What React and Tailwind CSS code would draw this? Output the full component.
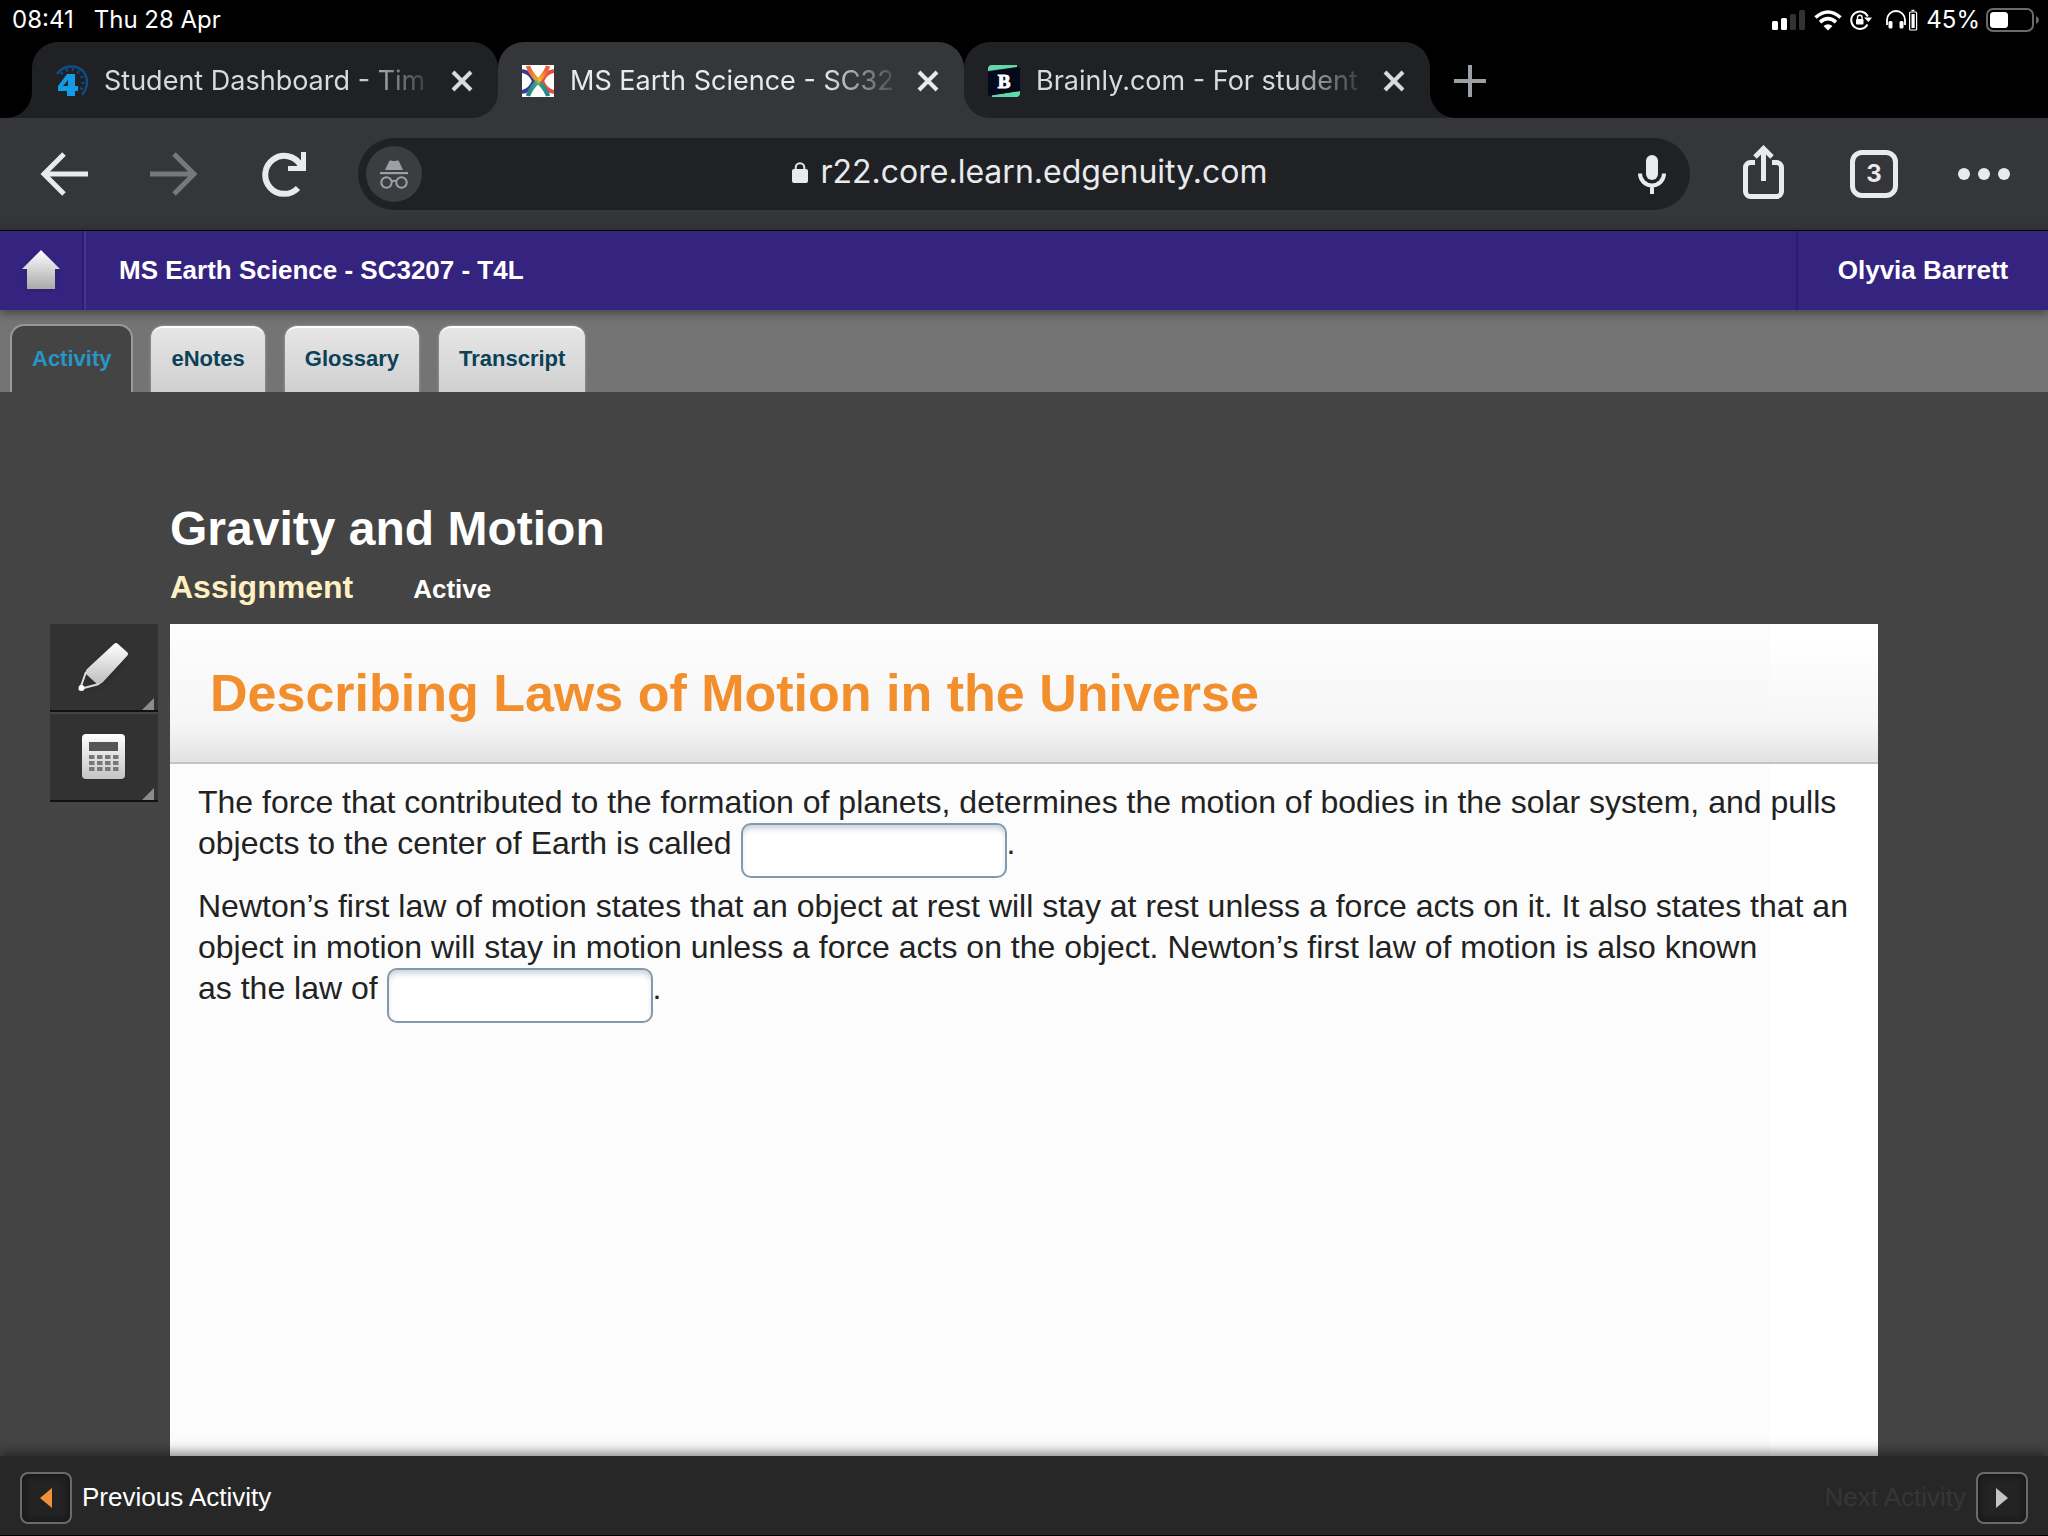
import React from "react";

const TABS = [
  {
    id: "dashboard",
    title: "Student Dashboard - Tim",
    wrap: "bg-[linear-gradient(#000_50%,#35363a_50%)]",
    shape: "bg-[#202124] rounded-[26px] rounded-bl-none text-[#d8dadd]",
    icon: <DashboardLogo />,
  },
  {
    id: "science",
    title: "MS Earth Science - SC32",
    wrap: "bg-black",
    shape: "bg-[#35363a] rounded-t-[26px] text-[#e8eaed]",
    icon: <StarLogo />,
  },
  {
    id: "brainly",
    title: "Brainly.com - For student",
    wrap: "bg-[linear-gradient(#000_50%,#35363a_50%)]",
    shape: "bg-[#202124] rounded-[26px] rounded-br-none text-[#d8dadd]",
    icon: <BrainlyLogo />,
  },
];

function DashboardLogo() {
  return (
    <svg viewBox="0 0 32 32" className="size-8 shrink-0" aria-hidden="true">
      <path d="M1 9C7 0 20-1 27 6c6 7 5 17-1 24" fill="none" stroke="#0c4f86" strokeWidth="2.500" />
      <path d="M5 9C11 3 19 3 24 9c4 5 4 12-1 18" fill="none" stroke="#0c4f86" strokeWidth="3" strokeDasharray="2 4" />
      <path d="M11 9h8v12h3v5h-3v5H11v-5H2v-5zm1 6l-5 6h5z" fill="#149be6" />
    </svg>
  );
}

function StarLogo() {
  return (
    <svg viewBox="0 0 32 32" className="size-8 shrink-0" fill="none" aria-hidden="true">
      <defs>
        <linearGradient id="armA" x1="0" y1="0" x2="1" y2="1">
          <stop offset="0.1" stopColor="#f0633a" />
          <stop offset="0.4" stopColor="#f19a2c" />
          <stop offset="0.6" stopColor="#3f9a80" />
          <stop offset="1" stopColor="#21808c" />
        </linearGradient>
        <linearGradient id="armB" x1="1" y1="0" x2="0" y2="1">
          <stop offset="0.1" stopColor="#ee5f3a" />
          <stop offset="0.45" stopColor="#fbb72c" />
          <stop offset="0.6" stopColor="#3f9a80" />
          <stop offset="1" stopColor="#21808c" />
        </linearGradient>
      </defs>
      <rect width="32" height="32" fill="#fff" />
      <path d="M0 6c6 1 10 5 12 10-2 5-6 10-12 11" stroke="#3b3a92" strokeWidth="4" />
      <path d="M32 6c-6 1-10 5-12 10 2 5 6 10 12 11" stroke="#e4503d" strokeWidth="4" />
      <path d="M6 1c2 7 6 10 10 15s8 8 10 15" stroke="url(#armA)" strokeWidth="4.500" />
      <path d="M26 1c-2 7-6 10-10 15S8 24 6 31" stroke="url(#armB)" strokeWidth="4.500" />
    </svg>
  );
}

function BrainlyLogo() {
  return (
    <svg viewBox="0 0 32 32" className="size-8 shrink-0" aria-hidden="true">
      <path d="M0 6V4q0-4 4-4h25v2z" fill="#63d8ad" />
      <path d="M4 30l28-4v2q0 4-4 4H4z" fill="#63d8ad" />
      <path d="M0 7L32 2v24L0 31z" fill="#040a1c" />
      <text x="16" y="23" textAnchor="middle" fontSize="19" fontWeight="900" fill="#fff" stroke="#fff" fontFamily="Liberation Serif, serif">
        B
      </text>
    </svg>
  );
}

function StatusBar() {
  return (
    <div className="flex h-[42px] items-center bg-black px-3 pb-0.5 font-['Inter',sans-serif] text-2xl leading-none text-white">
      <span>08:41</span>
      <span className="ml-5">Thu 28 Apr</span>
      <div className="ml-auto flex items-center">
        <svg width="34" height="20" viewBox="0 0 34 20" aria-hidden="true">
          <rect x="0" y="11" width="6" height="9" rx="1.5" fill="#fff" />
          <rect x="9" y="8" width="6" height="12" rx="1.5" fill="#fff" />
          <rect x="18" y="4" width="6" height="16" rx="1.5" fill="#333" />
          <rect x="27" y="0" width="6" height="20" rx="1.5" fill="#333" />
        </svg>
        <svg width="28" height="21" viewBox="0 0 28 21" className="ml-2" fill="none" stroke="#fff" aria-hidden="true">
          <path d="M1.5 7.500Q14-3.500 26.500 7.500" strokeWidth="3.600" />
          <path d="M6 12.200Q14 5 22 12.200" strokeWidth="3.600" />
          <path d="M14 20.500l-4.500-4.500Q14 12.500 18.500 16z" fill="#fff" stroke="none" />
        </svg>
        <svg width="22" height="20" viewBox="0 0 22 20" className="ml-2" fill="none" stroke="#fff" strokeWidth="2" aria-hidden="true">
          <path d="M17.800 6.500A8.700 8.700 0 1 0 17.500 14.500" />
          <path d="M14 7.500h8l-3.500 4.500z" fill="#fff" stroke="none" />
          <rect x="6" y="9" width="7.500" height="5.500" rx="1" fill="#fff" stroke="none" />
          <path d="M7.500 9V7.500a2.300 2.300 0 0 1 4.600 0V9" strokeWidth="1.400" />
        </svg>
        <svg width="32" height="22" viewBox="0 0 32 22" className="ml-3.5" fill="none" stroke="#fff" aria-hidden="true">
          <path d="M1 16v-5a9 9 0 0 1 18 0v5" strokeWidth="1.800" />
          <rect x="2.500" y="12" width="4" height="7.500" rx="1.500" fill="#fff" stroke="none" />
          <rect x="13.500" y="12" width="4" height="7.500" rx="1.500" fill="#fff" stroke="none" />
          <rect x="23.600" y="3" width="7" height="18" rx="1" strokeWidth="1.200" />
          <rect x="25.500" y="5" width="3.200" height="14" fill="#fff" stroke="none" />
          <path d="M25.500 1.500h3" strokeWidth="1.500" />
        </svg>
        <span className="ml-2">45%</span>
        <svg width="54" height="24" viewBox="0 0 54 24" className="-mr-1 ml-1.5" aria-hidden="true">
          <rect x="1" y="1" width="46" height="22" rx="6" fill="none" stroke="#6b6b6b" strokeWidth="2" />
          <rect x="4" y="4" width="18" height="16" rx="3.500" fill="#fff" />
          <path d="M50 8q3 1.500 3 4t-3 4z" fill="#6b6b6b" />
        </svg>
      </div>
    </div>
  );
}

function TabStrip() {
  return (
    <div className="flex h-19 bg-black font-['Inter',sans-serif] text-[27px]">
      <div className="w-8 shrink-0 bg-[#202124]">
        <div className="h-full rounded-br-[26px] bg-black" />
      </div>
      {TABS.map((tab) => (
        <div key={tab.id} className={"w-[466px] " + tab.wrap}>
          <div className={"flex h-full items-center gap-4 pt-0.5 pr-5 pl-6 " + tab.shape}>
            {tab.icon}
            <span className="min-w-0 flex-1 whitespace-nowrap [mask-image:linear-gradient(to_right,#000_76%,transparent)]">
              {tab.title}
            </span>
            <button type="button" aria-label="Close tab" className="-ml-2 flex size-8 items-center justify-center">
              <svg width="22" height="22" viewBox="0 0 22 22" stroke="currentColor" strokeWidth="4" aria-hidden="true">
                <path d="M2 2l18 18M20 2L2 20" />
              </svg>
            </button>
          </div>
        </div>
      ))}
      <div className="w-8 shrink-0 bg-[#202124]">
        <div className="h-full rounded-bl-[26px] bg-black" />
      </div>
      <button type="button" aria-label="New tab" className="-ml-8 flex w-20 items-center justify-center pt-0.5">
        <svg width="32" height="32" viewBox="0 0 32 32" stroke="#9aa0a6" strokeWidth="4" aria-hidden="true">
          <path d="M0 16h32M16 0v32" />
        </svg>
      </button>
    </div>
  );
}

function Toolbar() {
  return (
    <div className="flex h-[113px] items-center border-b border-black bg-[#35363a] pr-9 pl-10 text-[#e8eaed]">
      <button type="button" aria-label="Back">
        <svg width="48" height="44" viewBox="0 0 48 44" fill="none" stroke="currentColor" strokeWidth="5" aria-hidden="true">
          <path d="M48 22H4M24 2L4 22l20 20" />
        </svg>
      </button>
      <button type="button" aria-label="Forward" className="ml-[62px] text-[#77787b]">
        <svg width="48" height="44" viewBox="0 0 48 44" fill="none" stroke="currentColor" strokeWidth="5" aria-hidden="true">
          <path d="M0 22h44M24 2l20 20-20 20" />
        </svg>
      </button>
      <button type="button" aria-label="Reload" className="ml-16">
        <svg width="45" height="45" viewBox="0 0 45 45" aria-hidden="true">
          <path d="M36 36A19 19 0 1 1 38.500 13" fill="none" stroke="currentColor" strokeWidth="6" />
          <path d="M39 0h5v19H26v-5l9 0 4-4z" fill="currentColor" />
        </svg>
      </button>
      <div className="ml-[51px] flex h-[72px] flex-1 items-center rounded-full bg-[#202124] pr-6 pl-2">
        <div className="flex size-14 items-center justify-center rounded-full bg-[#3c3d40]">
          <svg width="28" height="29" viewBox="0 0 28 29" aria-hidden="true">
            <path d="M5 10L9 1.500Q9.500 0 11 0.500L14 1.300 17 .5Q18.500 0 19 1.500L23 10z" fill="#9aa0a6" />
            <rect y="12" width="28" height="2.200" fill="#9aa0a6" />
            <g fill="none" stroke="#9aa0a6" strokeWidth="2">
              <circle cx="6.500" cy="22.500" r="5.200" />
              <circle cx="21.500" cy="22.500" r="5.200" />
              <path d="M11.500 21.500q2.500-1.500 5 0" />
            </g>
          </svg>
        </div>
        <div className="flex flex-1 items-center justify-center gap-3 pb-1 font-['Inter',sans-serif] text-[32px] leading-none">
          <svg width="16" height="21" viewBox="0 0 16 21" aria-hidden="true">
            <rect y="7" width="16" height="14" rx="2" fill="currentColor" />
            <path d="M3.700 8V5.500a4.300 4.300 0 0 1 8.600 0V8" fill="none" stroke="currentColor" strokeWidth="2" />
          </svg>
          <span>r22.core.learn.edgenuity.com</span>
        </div>
        <button type="button" aria-label="Voice search">
          <svg width="28" height="39" viewBox="0 0 28 39" aria-hidden="true">
            <rect x="8" y="0" width="12" height="25" rx="6" fill="currentColor" />
            <path d="M2 18.500a12 12 0 0 0 24 0M14 30v9" fill="none" stroke="currentColor" strokeWidth="4" />
          </svg>
        </button>
      </div>
      <button type="button" aria-label="Share" className="-mt-1 ml-[53px]">
        <svg width="41" height="54" viewBox="0 0 41 54" fill="none" stroke="currentColor" strokeWidth="5" aria-hidden="true">
          <path d="M12 17.500H7.500a5 5 0 0 0-5 5v24a5 5 0 0 0 5 5h26a5 5 0 0 0 5-5v-24a5 5 0 0 0-5-5H29" />
          <path d="M20.500 36V4M12 12l8.500-8.500L29 12" />
        </svg>
      </button>
      <button
        type="button"
        aria-label="3 open tabs"
        className="ml-[66px] flex size-12 items-center justify-center rounded-xl border-[5px] border-[#e8eaed] font-['Inter',sans-serif] text-2xl leading-none font-bold"
      >
        3
      </button>
      <button type="button" aria-label="More" className="ml-[60px]">
        <svg width="54" height="12" viewBox="0 0 54 12" fill="currentColor" aria-hidden="true">
          <circle cx="6" cy="6" r="6" />
          <circle cx="26" cy="6" r="6" />
          <circle cx="46" cy="6" r="6" />
        </svg>
      </button>
    </div>
  );
}

function CourseHeader() {
  return (
    <header className="relative z-10 flex h-[79px] items-stretch bg-[#35247f] text-[26px] font-bold text-white shadow-[0_2px_10px_rgba(0,0,0,0.5)]">
      <a href="#home" aria-label="Home" className="flex w-[84px] items-center justify-center border-r-2 border-[#2b1b72]">
        <svg width="40" height="42" viewBox="0 0 40 42" aria-hidden="true">
          <defs>
            <linearGradient id="home" x1="0" y1="0" x2="0" y2="1">
              <stop offset="0" stopColor="#fff" />
              <stop offset="1" stopColor="#a9a9a9" />
            </linearGradient>
          </defs>
          <path d="M20 0l19 19h-5v20H6V19H1z" fill="url(#home)" className="drop-shadow-md" />
        </svg>
      </a>
      <h1 className="flex flex-1 items-center border-l-2 border-[#44348d] pl-[33px]">MS Earth Science - SC3207 - T4L</h1>
      <div className="flex w-[252px] items-center justify-center border-l-2 border-[#2b1b72]">Olyvia Barrett</div>
    </header>
  );
}

function ViewTabs() {
  const light =
    "rounded-t-xl border-t-2 border-white bg-linear-to-b from-[#e6e6e6] to-[#d0d0d0] px-5 pb-1 text-[#0b4257] shadow-[0_0_3px_rgba(255,255,255,0.4)]";
  return (
    <nav className="flex h-[82px] items-end gap-5 overflow-hidden bg-[#747474] pl-3 text-[22px] font-bold">
      <button type="button" className="h-[66px] rounded-t-xl bg-[#444] px-5 pb-0.5 text-[#2795c5] shadow-[0_0_0_2px_#999]">
        Activity
      </button>
      <button type="button" className={"h-[66px] " + light}>eNotes</button>
      <button type="button" className={"h-[66px] " + light}>Glossary</button>
      <button type="button" className={"h-[66px] " + light}>Transcript</button>
    </nav>
  );
}

function ToolButton({ label, children }) {
  return (
    <button
      type="button"
      aria-label={label}
      className="relative flex h-[88px] w-full items-center justify-center border-b-2 border-[#111] bg-[#323232]"
    >
      {children}
      <svg width="12" height="12" viewBox="0 0 12 12" className="absolute right-1 bottom-0" aria-hidden="true">
        <path d="M12 0v12H0z" fill="#8c8c8c" />
      </svg>
    </button>
  );
}

function Tools() {
  return (
    <aside className="flex w-[108px] shrink-0 flex-col gap-0.5">
      <ToolButton label="Highlighter">
        <svg width="52" height="50" viewBox="0 0 52 50" aria-hidden="true">
          <defs>
            <linearGradient id="pen" x1="0" y1="0" x2="0" y2="1">
              <stop offset="0" stopColor="#fff" />
              <stop offset="1" stopColor="#bdbdbd" />
            </linearGradient>
          </defs>
          <g className="drop-shadow-md">
            <path d="M36 2q2-2 4 0l9 8q2 2 0 4L25 40q-2 2-5 3L8 32q-1-3 1-5z" fill="url(#pen)" />
            <path d="M8 30L2 47l19-5" fill="none" stroke="#ddd" strokeWidth="2" />
            <circle cx="3.500" cy="46" r="3" fill="#fff" />
          </g>
        </svg>
      </ToolButton>
      <ToolButton label="Calculator">
        <svg width="44" height="46" viewBox="0 0 44 46" aria-hidden="true">
          <defs>
            <linearGradient id="calc" x1="0" y1="0" x2="0" y2="1">
              <stop offset="0" stopColor="#fff" />
              <stop offset="1" stopColor="#c4c4c4" />
            </linearGradient>
          </defs>
          <rect x="0" y="0" width="43" height="45" rx="4" fill="url(#calc)" className="drop-shadow-md" />
          <rect x="7" y="8" width="29" height="9" fill="#555" />
          {[21, 27, 33].map((y) =>
            [7, 15, 23, 31].map((x) => <rect key={x + "-" + y} x={x} y={y} width="5.500" height="4" fill="#777" />)
          )}
        </svg>
      </ToolButton>
    </aside>
  );
}

function Blank({ label }) {
  return (
    <input
      type="text"
      aria-label={label}
      className="h-[55px] w-[266px] rounded-[10px] border-2 border-[#8199ad] bg-white px-3 align-top shadow-[inset_0_5px_6px_-2px_#c6ced8] outline-none"
    />
  );
}

function Lesson() {
  return (
    <main className="flex flex-1 flex-col bg-[#444] pr-[170px] pl-[50px]">
      <div className="pt-[111px] pl-[120px] font-bold text-white">
        <h2 className="text-[48px] leading-[52px]">Gravity and Motion</h2>
        <div className="flex h-[69px] items-baseline gap-[60px] pt-2">
          <span className="text-[32px] leading-[48px] text-[#fff0c2]">Assignment</span>
          <span className="text-[26px]">Active</span>
        </div>
      </div>
      <div className="flex flex-1 gap-3">
        <Tools />
        <article className="flex min-w-0 flex-1 flex-col bg-[linear-gradient(to_right,#fcfcfc_1600px,#fff_1600px)]">
          <div className="flex h-[140px] items-center border-b-2 border-[#c4c4c4] bg-[linear-gradient(to_bottom,transparent_10%,#f6f6f6_72%,#e2e2e2)] pl-10">
            <h3 className="text-[52px] font-bold text-[#f28e2b]">Describing Laws of Motion in the Universe</h3>
          </div>
          <div className="flex flex-col gap-2 py-[18px] pr-6 pl-7 text-[32px] leading-[41px] text-[#222]">
            <p>
              The force that contributed to the formation of planets, determines the motion of bodies in the solar system, and pulls
              objects to the center of Earth is called <Blank label="Force" />.
            </p>
            <p>
              Newton’s first law of motion states that an object at rest will stay at rest unless a force acts on it. It also states that an
              object in motion will stay in motion unless a force acts on the object. Newton’s first law of motion is also known
              <br />
              as the law of <Blank label="Law" />.
            </p>
          </div>
        </article>
      </div>
    </main>
  );
}

function Footer() {
  const box = "flex size-[52px] items-center justify-center rounded-lg border-2 border-[#6a6a6a] bg-[#232323] shadow-[inset_0_0_8px_#111]";
  return (
    <footer className="relative z-10 flex h-20 items-center justify-between border-b border-black bg-[#272727] px-5 pt-1 text-[26px] text-white shadow-[0_-3px_12px_rgba(0,0,0,0.5)]">
      <button type="button" className="flex items-center gap-2.5">
        <span className={box}>
          <svg width="12" height="20" viewBox="0 0 12 20" aria-hidden="true">
            <path d="M12 0v20L0 10z" fill="#f0903a" />
          </svg>
        </span>
        Previous Activity
      </button>
      <button type="button" className="flex items-center gap-2.5 text-[#363636]">
        Next Activity
        <span className={box}>
          <svg width="12" height="20" viewBox="0 0 12 20" aria-hidden="true">
            <path d="M0 0v20l12-10z" fill="#c4c4c4" />
          </svg>
        </span>
      </button>
    </footer>
  );
}

export default function App() {
  return (
    <div className="flex min-h-screen flex-col bg-[#444] font-['Liberation_Sans',Arial,sans-serif]">
      <StatusBar />
      <TabStrip />
      <Toolbar />
      <CourseHeader />
      <ViewTabs />
      <Lesson />
      <Footer />
    </div>
  );
}
